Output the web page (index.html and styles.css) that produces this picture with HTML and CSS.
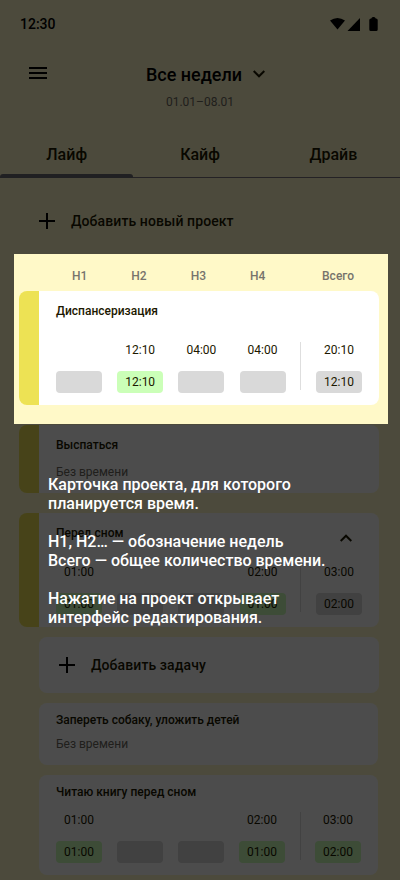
FILE: index.html
```html
<!DOCTYPE html>
<html lang="ru">
<head>
<meta charset="utf-8">
<title>Все недели</title>
<link rel="stylesheet" href="styles.css">
</head>
<body>
<div class="screen">
  <div class="status">
    <span class="clock">12:30</span>
    <svg class="status-icons" width="52" height="16" viewBox="0 0 52 16">
      <path d="M0 4.500Q7.500 -.5 15 4.500L7.500 13.500Z"/>
      <path d="M30 2V15H17.500Z"/>
      <path d="M41 2.500H41.300Q41.700 1 43 1H44Q45.300 1 45.700 2.500H46Q47.700 2.500 47.700 4V13.500Q47.700 15 46.200 15H40.800Q39.300 15 39.300 13.500V4Q39.300 2.500 41 2.500Z"/>
    </svg>
  </div>
  <header class="header">
    <svg class="menu" width="18" height="12" viewBox="0 0 18 12"><path d="M0 0H18V2H0ZM0 5H18V7H0ZM0 10H18V12H0Z"/></svg>
    <div class="period">
      <div class="title">Все недели<svg width="12" height="8" viewBox="0 0 12 8"><path d="M.7 1L6 6.300L11.300 1" fill="none" stroke="#1c1800" stroke-width="2"/></svg></div>
      <div class="dates">01.01–08.01</div>
    </div>
  </header>
  <nav class="tabs">
    <div class="tab active">Лайф</div>
    <div class="tab">Кайф</div>
    <div class="tab">Драйв</div>
  </nav>
  <div class="add-project">
    <svg width="16" height="16" viewBox="0 0 16 16"><path d="M7 0H9V7H16V9H9V16H7V9H0V7H7Z"/></svg>
    <span>Добавить новый проект</span>
  </div>
  <div class="weeks">
    <span>Н1</span><span>Н2</span><span>Н3</span><span>Н4</span><span class="sum">Всего</span>
  </div>
  <main class="list">
    <section class="card project tall">
      <h2>Диспансеризация</h2>
      <div class="grid">
        <div class="cell"><span></span><b></b></div>
        <div class="cell"><span>12:10</span><b class="done">12:10</b></div>
        <div class="cell"><span>04:00</span><b></b></div>
        <div class="cell"><span>04:00</span><b></b></div>
        <i></i>
        <div class="cell"><span>20:10</span><b>12:10</b></div>
      </div>
    </section>
    <section class="card project short">
      <h2>Выспаться</h2>
      <p>Без времени</p>
    </section>
    <section class="card project tall">
      <h2>Перед сном<svg width="12" height="8" viewBox="0 0 12 8"><path d="M.7 7L6 1.700L11.300 7" fill="none" stroke="#1c1800" stroke-width="2"/></svg></h2>
      <div class="grid">
        <div class="cell"><span>01:00</span><b class="done">01:00</b></div>
        <div class="cell"><span></span><b></b></div>
        <div class="cell"><span></span><b></b></div>
        <div class="cell"><span>02:00</span><b class="done">01:00</b></div>
        <i></i>
        <div class="cell"><span>03:00</span><b>02:00</b></div>
      </div>
    </section>
    <div class="tasks">
      <section class="card add-task">
        <svg width="16" height="16" viewBox="0 0 16 16"><path d="M7 0H9V7H16V9H9V16H7V9H0V7H7Z"/></svg>
        <span>Добавить задачу</span>
      </section>
      <section class="card task brief">
        <h2>Запереть собаку, уложить детей</h2>
        <p>Без времени</p>
      </section>
      <section class="card task timed">
        <h2>Читаю книгу перед сном</h2>
        <div class="grid">
          <div class="cell"><span>01:00</span><b class="done">01:00</b></div>
          <div class="cell"><span></span><b></b></div>
          <div class="cell"><span></span><b></b></div>
          <div class="cell"><span>02:00</span><b class="done">01:00</b></div>
          <i></i>
          <div class="cell"><span>03:00</span><b class="done">02:00</b></div>
        </div>
      </section>
    </div>
  </main>
  <div class="spotlight"></div>
  <div class="hint">
    <p>Карточка проекта, для которого<br>планируется время.</p>
    <p>Н1, Н2… — обозначение недель<br>Всего — общее количество времени.</p>
    <p>Нажатие на проект открывает<br>интерфейс редактирования.</p>
  </div>
</div>
</body>
</html>
```
FILE: styles.css
```css
* { box-sizing: border-box; }
body, h2, p { margin: 0; }
body { font-family: Roboto, sans-serif; color: #1c1800; }
svg { display: block; flex: none; }
.screen {
  position: relative;
  width: 400px;
  height: 880px;
  overflow: hidden;
  background: #fff9c8;
}
.status {
  display: flex;
  justify-content: space-between;
  height: 48px;
  padding: 16px 18px 0 20px;
  color: #000;
}
.clock { font-size: 14px; line-height: 17px; font-weight: 500; }
.header {
  display: grid;
  grid-template-columns: 29px 1fr;
  height: 82px;
  padding-top: 16px;
}
.menu { margin: 3px 0 0 29px; }
.period { text-align: center; }
.title {
  display: flex;
  align-items: center;
  justify-content: center;
  gap: 11px;
  margin: 0 0 0 -18px;
  color: #000;
  font-size: 18px;
  line-height: 22px;
  font-weight: 500;
}
.title svg { margin-top: -2px; }
.dates {
  margin: 9px 0 0 -29px;
  color: #6b6860;
  font-size: 12px;
  line-height: 14px;
}
.tabs {
  display: grid;
  grid-template-columns: repeat(3, 1fr);
  height: 48px;
  border-bottom: 1px solid #79747e;
}
.tab { padding-top: 15px; font-size: 16px; line-height: 20px; font-weight: 500; text-align: center; }
.tab.active::after {
  content: "";
  display: block;
  height: 4px;
  margin-top: 9px;
  border-radius: 3px 3px 0 0;
  background: #6b6c74;
}
.add-project { display: flex; align-items: center; gap: 16px; height: 86px; padding-left: 39px; font-size: 14px; font-weight: 500; letter-spacing: 0.1px; }
.weeks {
  display: grid;
  grid-template-columns: 46px 46px 46px 46px 46px;
  column-gap: 13.400px;
  height: 27px;
  padding: 5px 0 0 56.600px;
  color: #77746c;
  font-size: 12px;
  line-height: 14px;
  font-weight: 500;
  text-align: center;
}
.sum { margin-left: 20.900px; margin-right: -20.900px; }
.list { display: flex; flex-direction: column; padding: 0 21px 0 19px; }
.card { border-radius: 8px; background: #fff; }
.card h2 { display: flex; justify-content: space-between; font-size: 12px; line-height: 14px; font-weight: 500; }
.card p { color: #6b6860; font-size: 12px; line-height: 14px; }
.project { margin-bottom: 20px; padding: 13px 17px 0 37px; background: linear-gradient(90deg, #ede254 20px, #fff 20px); }
.project h2 svg { margin: 8px 10px 0 0; }
.tall { height: 114px; }
.tall h2 { height: 38px; }
.short { height: 68px; }
.short p { margin-top: 13px; }
.grid { display: flex; height: 51px; }
.cell { width: 46px; margin-right: 15.200px; font-size: 12px; text-align: center; }
.cell:last-child { margin-right: 0; }
.cell span { display: block; height: 29px; padding-top: 1px; line-height: 14px; }
.cell b { display: block; height: 22px; border-radius: 4px; background: #d9d9d9; font-weight: 400; line-height: 22px; }
.cell b.done { background: #cbffb8; }
.grid i { width: 1px; height: 48px; margin: 0 14.900px 0 -0.700px; background: #dedede; }
.tasks { display: flex; flex-direction: column; gap: 10px; margin: -10px 0 0 20px; }
.add-task { display: flex; align-items: center; gap: 16px; height: 56px; padding-left: 20px; font-size: 14px; font-weight: 500; letter-spacing: 0.1px; }
.task { margin-right: 1px; padding: 10px 17px 0; }
.brief { height: 62px; }
.brief p { margin-top: 10px; }
.timed { height: 100px; }
.timed h2 { height: 27px; }
.timed .cell { margin-right: 15px; }
.timed .cell:last-child { margin-right: 0; }
.timed .grid i { margin: 0 14px 0 0; }
.spotlight {
  position: absolute;
  left: 14px;
  top: 254px;
  width: 374px;
  height: 170px;
  box-shadow: 0 0 0 1000px rgba(0, 0, 0, 0.7);
}
.hint { position: absolute; left: 48px; top: 475px; color: #fff; font-size: 16px; line-height: 19px; font-weight: 500; white-space: nowrap; }
.hint p + p { margin-top: 19px; }
```
